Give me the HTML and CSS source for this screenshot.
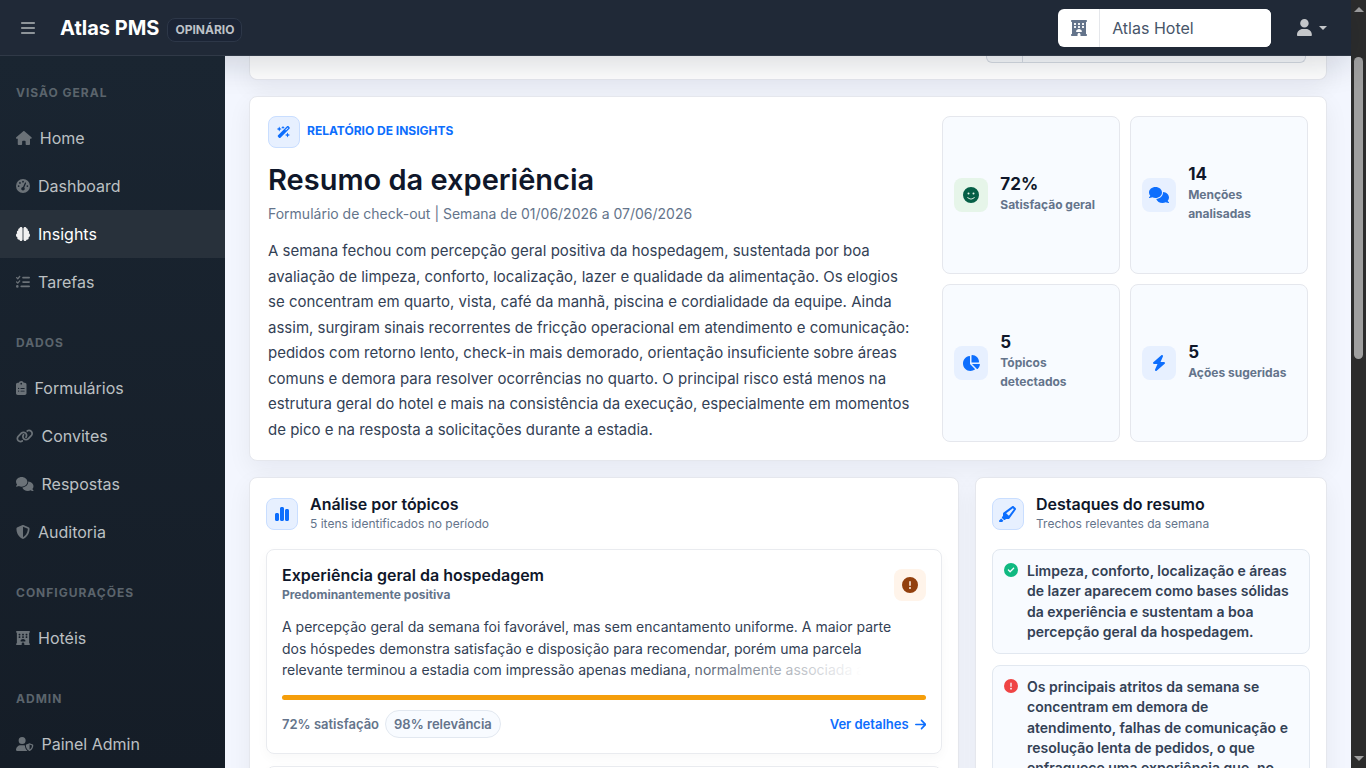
FILE: index.html
```html
<!DOCTYPE html>
<html lang="pt-BR">
<head>
<meta charset="utf-8">
<meta name="viewport" content="width=device-width, initial-scale=1">
<title>Atlas PMS - Insights</title>
<link rel="stylesheet" href="styles.css">
</head>
<body>
<svg class="sprite" aria-hidden="true">
  <defs>
    <path id="i-hotel" d="M0 32C0 14.3 14.3 0 32 0H480c17.7 0 32 14.3 32 32s-14.3 32-32 32V448c17.7 0 32 14.3 32 32s-14.3 32-32 32H304V464c0-26.5-21.5-48-48-48s-48 21.5-48 48v48H32c-17.7 0-32-14.3-32-32s14.3-32 32-32V64C14.3 64 0 49.7 0 32zm96 80v32c0 8.800 7.200 16 16 16h32c8.800 0 16-7.200 16-16V112c0-8.800-7.200-16-16-16H112c-8.800 0-16 7.200-16 16zM240 96c-8.800 0-16 7.200-16 16v32c0 8.800 7.200 16 16 16h32c8.800 0 16-7.200 16-16V112c0-8.800-7.200-16-16-16H240zm112 16v32c0 8.800 7.200 16 16 16h32c8.800 0 16-7.200 16-16V112c0-8.800-7.200-16-16-16H368c-8.800 0-16 7.200-16 16zM112 192c-8.800 0-16 7.200-16 16v32c0 8.800 7.200 16 16 16h32c8.800 0 16-7.200 16-16V208c0-8.800-7.200-16-16-16H112zm112 16v32c0 8.800 7.200 16 16 16h32c8.800 0 16-7.200 16-16V208c0-8.800-7.200-16-16-16H240c-8.800 0-16 7.200-16 16zm144-16c-8.800 0-16 7.200-16 16v32c0 8.800 7.200 16 16 16h32c8.800 0 16-7.200 16-16V208c0-8.800-7.200-16-16-16H368zM328 384c13.300 0 24.300-10.900 21-23.800c-10.600-41.500-48.200-72.200-93-72.200s-82.500 30.700-93 72.200c-3.300 12.800 7.800 23.800 21 23.800H328z"/>
    <path id="i-comments" d="M208 352c114.900 0 208-78.800 208-176S322.900 0 208 0S0 78.800 0 176c0 38.600 14.700 74.300 39.600 103.400c-3.500 9.400-8.700 17.700-14.200 24.700c-4.800 6.200-9.700 11-13.300 14.300c-1.800 1.600-3.300 2.900-4.300 3.700c-.5 .4-.9 .7-1.100 .8l-.2 .2C1 327.200-1.400 334.400 .8 340.900S9.100 352 16 352c21.800 0 43.800-5.600 62.100-12.500c9.200-3.500 17.800-7.400 25.200-11.400C134.100 343.300 169.800 352 208 352zM448 176c0 112.300-99.100 196.900-216.500 207C255.800 457.400 336.400 512 432 512c38.200 0 73.900-8.700 104.700-23.900c7.500 4 16 7.900 25.200 11.400c18.300 6.900 40.300 12.500 62.100 12.500c6.900 0 13.100-4.500 15.200-11.100c2.100-6.600-.2-13.800-5.800-17.900l-.2-.2c-.2-.2-.6-.4-1.100-.8c-1-.8-2.500-2-4.300-3.700c-3.600-3.300-8.500-8.100-13.300-14.300c-5.500-7-10.700-15.400-14.200-24.700c24.900-29 39.600-64.700 39.600-103.400c0-92.800-84.900-168.900-192.600-175.500c.4 5.100 .6 10.300 .6 15.500z"/>
    <path id="i-alert" d="M256 512A256 256 0 1 0 256 0a256 256 0 1 0 0 512zm0-384c13.300 0 24 10.700 24 24V264c0 13.300-10.700 24-24 24s-24-10.700-24-24V152c0-13.300 10.700-24 24-24zM224 352a32 32 0 1 1 64 0 32 32 0 1 1 -64 0z"/>
  </defs>
</svg>

<div class="window">
  <div class="app">
    <header class="topbar">
      <button class="menu-toggle" type="button" aria-label="Alternar menu">
        <svg class="icon" viewBox="0 0 448 512"><path d="M0 96C0 78.300 14.300 64 32 64H416c17.700 0 32 14.300 32 32s-14.300 32-32 32H32C14.300 128 0 113.700 0 96zM0 256c0-17.700 14.300-32 32-32H416c17.700 0 32 14.300 32 32s-14.300 32-32 32H32c-17.700 0-32-14.300-32-32zM448 416c0 17.700-14.300 32-32 32H32c-17.700 0-32-14.300-32-32s14.300-32 32-32H416c17.700 0 32 14.300 32 32z"/></svg>
      </button>
      <a class="brand" href="#">Atlas PMS</a>
      <span class="brand-badge">OPINÁRIO</span>
      <div class="hotel-picker">
        <label class="picker-icon" for="hotel" aria-label="Hotel"><svg class="icon" viewBox="0 0 512 512"><use href="#i-hotel"/></svg></label>
        <select class="picker-select" id="hotel"><option>Atlas Hotel</option></select>
      </div>
      <button class="user-menu" type="button" aria-label="Conta">
        <svg class="icon" viewBox="0 0 448 512"><path d="M224 256A128 128 0 1 0 224 0a128 128 0 1 0 0 256zm-45.700 48C79.800 304 0 383.800 0 482.300C0 498.700 13.300 512 29.700 512H418.300c16.400 0 29.700-13.300 29.700-29.700C448 383.800 368.200 304 269.700 304H178.300z"/></svg>
        <span class="caret"></span>
      </button>
    </header>

    <nav class="sidebar">
      <h2 class="nav-heading">VISÃO GERAL</h2>
      <a class="nav-link" href="#"><svg class="icon" viewBox="0 0 576 512"><path d="M575.800 255.500c0 18-15 32.100-32 32.100h-32l.7 160.200c0 2.700-.2 5.400-.5 8.100V472c0 22.100-17.900 40-40 40H392c-22.100 0-40-17.900-40-40V384c0-17.700-14.300-32-32-32H256c-17.700 0-32 14.300-32 32v88c0 22.100-17.900 40-40 40H104c-22.100 0-40-17.900-40-40V287.600H32c-18 0-32-14-32-32.100c0-9 3-17 10-24L266.400 8c7-7 15-8 22-8s15 2 21 7L564.800 231.500c8 7 12 15 11 24z"/></svg>Home</a>
      <a class="nav-link" href="#"><svg class="icon" viewBox="0 0 512 512"><path d="M0 256a256 256 0 1 1 512 0A256 256 0 1 1 0 256zM288 96a32 32 0 1 0 -64 0 32 32 0 1 0 64 0zM256 416c35.300 0 64-28.700 64-64c0-17.400-6.900-33.100-18.100-44.600L366 161.700c5.300-12.100-.2-26.300-12.300-31.600s-26.300 .2-31.600 12.300L257.900 288c-.6 0-1.300 0-1.900 0c-35.300 0-64 28.700-64 64s28.700 64 64 64zM176 144a32 32 0 1 0 -64 0 32 32 0 1 0 64 0zM96 288a32 32 0 1 0 0-64 32 32 0 1 0 0 64zm352-32a32 32 0 1 0 -64 0 32 32 0 1 0 64 0z"/></svg>Dashboard</a>
      <a class="nav-link active" href="#" aria-current="page"><svg class="icon" viewBox="0 0 512 512"><path d="M184 0c30.900 0 56 25.100 56 56V456c0 30.900-25.100 56-56 56c-28.900 0-52.700-21.900-55.700-50.100c-5.200 1.400-10.700 2.100-16.300 2.100c-35.300 0-64-28.700-64-64c0-7.400 1.300-14.600 3.600-21.200C21.400 367.400 0 338.200 0 304c0-31.900 18.700-59.500 45.800-72.300C37.100 220.800 32 207 32 192c0-30.700 21.600-56.300 50.400-62.600C80.800 123.900 80 118 80 112c0-29.900 20.600-55.100 48.300-62.100C131.300 21.900 155.100 0 184 0zM328 0c28.900 0 52.600 21.900 55.700 49.900c27.800 7 48.300 32.100 48.300 62.100c0 6-.8 11.900-2.400 17.400c28.800 6.200 50.400 31.900 50.400 62.600c0 15-5.100 28.800-13.800 39.700C493.300 244.500 512 272.100 512 304c0 34.200-21.400 63.400-51.600 74.800c2.300 6.600 3.600 13.800 3.600 21.200c0 35.300-28.700 64-64 64c-5.600 0-11.100-.7-16.300-2.100c-3 28.200-26.800 50.100-55.700 50.100c-30.900 0-56-25.100-56-56V56c0-30.900 25.100-56 56-56z"/></svg>Insights</a>
      <a class="nav-link" href="#"><svg class="icon" viewBox="0 0 512 512"><path d="M152.100 38.200c9.900 8.900 10.700 24 1.800 33.900l-72 80c-4.400 4.900-10.600 7.800-17.200 7.900s-12.900-2.400-17.600-7L7 113C-2.300 103.600-2.300 88.400 7 79s24.600-9.400 33.900 0l22.100 22.100 55.100-61.200c8.900-9.900 24-10.700 33.900-1.800zm0 160c9.900 8.900 10.700 24 1.800 33.900l-72 80c-4.400 4.900-10.600 7.800-17.200 7.900s-12.900-2.400-17.600-7L7 273c-9.400-9.400-9.400-24.600 0-33.900s24.600-9.400 33.900 0l22.100 22.100 55.100-61.200c8.900-9.900 24-10.700 33.900-1.800zM224 96c0-17.700 14.300-32 32-32H480c17.700 0 32 14.300 32 32s-14.300 32-32 32H256c-17.700 0-32-14.300-32-32zm0 160c0-17.700 14.300-32 32-32H480c17.700 0 32 14.300 32 32s-14.300 32-32 32H256c-17.700 0-32-14.300-32-32zM160 416c0-17.700 14.300-32 32-32H480c17.700 0 32 14.300 32 32s-14.300 32-32 32H192c-17.700 0-32-14.300-32-32zM48 368a48 48 0 1 1 0 96 48 48 0 1 1 0-96z"/></svg>Tarefas</a>

      <h2 class="nav-heading">DADOS</h2>
      <a class="nav-link" href="#"><svg class="icon" viewBox="0 0 384 512"><path d="M192 0c-41.800 0-77.400 26.700-90.500 64H64C28.700 64 0 92.700 0 128V448c0 35.300 28.700 64 64 64H320c35.300 0 64-28.700 64-64V128c0-35.300-28.700-64-64-64H282.500C269.400 26.700 233.800 0 192 0zm0 64a32 32 0 1 1 0 64 32 32 0 1 1 0-64zM72 272a24 24 0 1 1 48 0 24 24 0 1 1 -48 0zm104-16H304c8.800 0 16 7.200 16 16s-7.200 16-16 16H176c-8.800 0-16-7.200-16-16s7.200-16 16-16zM72 368a24 24 0 1 1 48 0 24 24 0 1 1 -48 0zm88 0c0-8.800 7.200-16 16-16H304c8.800 0 16 7.200 16 16s-7.200 16-16 16H176c-8.800 0-16-7.200-16-16z"/></svg>Formulários</a>
      <a class="nav-link" href="#"><svg class="icon" viewBox="0 0 640 512"><path d="M579.800 267.700c56.500-56.500 56.500-148 0-204.500c-50-50-128.800-56.500-186.300-15.400l-1.600 1.100c-14.400 10.300-17.700 30.300-7.400 44.600s30.300 17.700 44.600 7.400l1.600-1.100c32.100-22.900 76-19.300 103.800 8.600c31.500 31.500 31.500 82.500 0 114L422.300 334.800c-31.500 31.500-82.500 31.500-114 0c-27.900-27.900-31.500-71.800-8.600-103.800l1.100-1.600c10.300-14.400 6.900-34.400-7.400-44.600s-34.400-6.900-44.600 7.400l-1.100 1.600C206.500 251.200 213 330 263 380c56.500 56.500 148 56.500 204.500 0L579.800 267.700zM60.200 244.300c-56.500 56.500-56.500 148 0 204.500c50 50 128.800 56.500 186.300 15.400l1.600-1.100c14.400-10.300 17.700-30.300 7.400-44.600s-30.300-17.700-44.600-7.400l-1.600 1.100c-32.100 22.900-76 19.300-103.800-8.600C74 372 74 321 105.500 289.500L217.700 177.200c31.500-31.500 82.500-31.500 114 0c27.900 27.900 31.500 71.800 8.600 103.900l-1.100 1.600c-10.300 14.400-6.900 34.400 7.400 44.600s34.400 6.900 44.600-7.400l1.100-1.600C433.500 260.800 427 182 377 132c-56.500-56.500-148-56.500-204.500 0L60.200 244.300z"/></svg>Convites</a>
      <a class="nav-link" href="#"><svg class="icon" viewBox="0 0 640 512"><use href="#i-comments"/></svg>Respostas</a>
      <a class="nav-link" href="#"><svg class="icon" viewBox="0 0 512 512"><path d="M256 0c4.600 0 9.200 1 13.400 2.900L457.700 82.800c22 9.300 38.400 31 38.300 57.200c-.5 99.200-41.300 280.700-213.600 363.200c-16.700 8-36.100 8-52.800 0C57.300 420.700 16.500 239.200 16 140c-.1-26.200 16.300-47.900 38.300-57.200L242.700 2.900C246.800 1 251.400 0 256 0zm0 66.800V444.800C394 378 431.100 230.100 432 141.400L256 66.800z"/></svg>Auditoria</a>

      <h2 class="nav-heading">CONFIGURAÇÕES</h2>
      <a class="nav-link" href="#"><svg class="icon" viewBox="0 0 512 512"><use href="#i-hotel"/></svg>Hotéis</a>

      <h2 class="nav-heading">ADMIN</h2>
      <a class="nav-link" href="#"><svg class="icon" viewBox="0 0 640 512"><path fill-rule="evenodd" d="M224 256A128 128 0 1 0 224 0a128 128 0 1 0 0 256zM274.700 304H173.300C77.600 304 0 381.600 0 477.300c0 19.100 15.500 34.700 34.700 34.700H413.300c1.800 0 3.600-.1 5.300-.4C362 460 328 390 325 311 309 306 292 304 274.700 304zM496 224l-120 50c-10 4-16 13-16 24 1 64 27 165 125 211 7 3 15 3 22 0 98-46 124-147 125-211 0-11-6-20-16-24zM496 276v184c63-34 87-97 88-148z"/></svg>Painel Admin</a>
    </nav>

    <main class="content">
      <section class="card filter-card" aria-label="Filtros">
        <div class="filter-field"><span class="filter-addon"></span></div>
      </section>

      <section class="card summary">
        <div class="summary-text">
          <div class="eyebrow">
            <span class="icon-box"><svg class="icon" viewBox="0 0 576 512"><path d="M234.700 42.700L197 56.800c-3 1.100-5 4-5 7.200s2 6.100 5 7.200l37.700 14.100L248.800 123c1.100 3 4 5 7.200 5s6.100-2 7.200-5l14.100-37.700L315 71.200c3-1.100 5-4 5-7.200s-2-6.100-5-7.200L277.300 42.700 263.200 5c-1.100-3-4-5-7.200-5s-6.100 2-7.200 5L234.700 42.700zM46.100 395.400c-18.700 18.700-18.700 49.100 0 67.900l34.600 34.600c18.700 18.700 49.100 18.700 67.900 0L529.900 116.500c18.700-18.700 18.700-49.100 0-67.900L495.300 14.100c-18.700-18.700-49.100-18.700-67.900 0L46.100 395.400zM484.600 82.600l-105 105-23.300-23.300 105-105 23.300 23.300zM7.500 117.200C3 118.900 0 123.200 0 128s3 9.100 7.500 10.800L64 160l21.200 56.500c1.700 4.500 6 7.500 10.800 7.500s9.100-3 10.800-7.500L128 160l56.500-21.200c4.500-1.700 7.500-6 7.500-10.800s-3-9.100-7.500-10.800L128 96 106.800 39.500C105.100 35 100.800 32 96 32s-9.100 3-10.800 7.500L64 96 7.500 117.200zm352 256c-4.500 1.700-7.500 6-7.500 10.800s3 9.100 7.500 10.800L416 416l21.200 56.500c1.700 4.500 6 7.500 10.800 7.500s9.100-3 10.800-7.500L480 416l56.500-21.200c4.500-1.700 7.500-6 7.500-10.800s-3-9.100-7.500-10.800L480 352l-21.200-56.500c-1.700-4.500-6-7.500-10.800-7.500s-9.100 3-10.800 7.500L416 352l-56.500 21.200z"/></svg></span>
            <span class="eyebrow-label">RELATÓRIO DE INSIGHTS</span>
          </div>
          <h1 class="summary-title">Resumo da experiência</h1>
          <p class="summary-meta">Formulário de check-out | Semana de 01/06/2026 a 07/06/2026</p>
          <p class="summary-body">A semana fechou com percepção geral positiva da hospedagem, sustentada por boa avaliação de limpeza, conforto, localização, lazer e qualidade da alimentação. Os elogios se concentram em quarto, vista, café da manhã, piscina e cordialidade da equipe. Ainda assim, surgiram sinais recorrentes de fricção operacional em atendimento e comunicação: pedidos com retorno lento, check-in mais demorado, orientação insuficiente sobre áreas comuns e demora para resolver ocorrências no quarto. O principal risco está menos na estrutura geral do hotel e mais na consistência da execução, especialmente em momentos de pico e na resposta a solicitações durante a estadia.</p>
        </div>
        <div class="stats">
          <div class="stat">
            <span class="stat-icon good"><svg class="icon" viewBox="0 0 512 512"><path fill-rule="evenodd" d="M256 512A256 256 0 1 0 256 0a256 256 0 1 0 0 512zM164 326c16 18 46 42 92 42s76-24 92-42c6-7 16-7 23-2s7 16 1 23c-20 23-60 53-116 53s-96-30-116-53c-6-7-5-17 1-23s17-5 23 2zM144 208a32 32 0 1 1 64 0 32 32 0 1 1 -64 0zM304 208a32 32 0 1 1 64 0 32 32 0 1 1 -64 0z"/></svg></span>
            <div class="stat-text"><strong class="stat-value">72%</strong><span class="stat-label">Satisfação geral</span></div>
          </div>
          <div class="stat">
            <span class="stat-icon"><svg class="icon" viewBox="0 0 640 512"><use href="#i-comments"/></svg></span>
            <div class="stat-text"><strong class="stat-value">14</strong><span class="stat-label">Menções analisadas</span></div>
          </div>
          <div class="stat">
            <span class="stat-icon"><svg class="icon" viewBox="0 0 576 512"><path d="M304 240V16.600c0-9 7-16.600 16-16.600C443.700 0 544 100.300 544 224c0 9-7.600 16-16.600 16H304zM32 272C32 150.700 122.100 50.300 239 34.300c9.200-1.300 17 6.100 17 15.400V288L412.500 444.500c6.700 6.700 6.200 17.700-1.500 23.100C371.800 495.600 323.800 512 272 512C139.500 512 32 404.600 32 272zm526.400 16c9.300 0 16.600 7.800 15.400 17c-7.700 55.900-34.600 105.600-73.900 142.300c-6 5.600-15.400 5.200-21.200-.7L320 288H558.400z"/></svg></span>
            <div class="stat-text"><strong class="stat-value">5</strong><span class="stat-label">Tópicos detectados</span></div>
          </div>
          <div class="stat">
            <span class="stat-icon"><svg class="icon" viewBox="0 0 448 512"><path d="M349.400 44.600c5.900-13.700 1.500-29.700-10.600-38.500s-28.600-8-39.900 1.800l-256 224c-10 8.800-13.600 22.900-8.900 35.300S50.700 288 64 288H175.500L98.600 467.400c-5.900 13.700-1.500 29.700 10.600 38.500s28.600 8 39.900-1.800l256-224c10-8.800 13.600-22.900 8.900-35.300s-16.600-20.700-30-20.700H272.500L349.400 44.600z"/></svg></span>
            <div class="stat-text"><strong class="stat-value">5</strong><span class="stat-label">Ações sugeridas</span></div>
          </div>
        </div>
      </section>

      <div class="columns">
        <section class="card panel">
          <header class="panel-head">
            <span class="icon-box"><svg class="icon" viewBox="0 0 448 512"><path d="M160 80c0-26.500 21.500-48 48-48h32c26.500 0 48 21.500 48 48V432c0 26.500-21.500 48-48 48H208c-26.500 0-48-21.500-48-48V80zM0 272c0-26.500 21.500-48 48-48H80c26.500 0 48 21.500 48 48V432c0 26.500-21.500 48-48 48H48c-26.500 0-48-21.500-48-48V272zM368 96h32c26.500 0 48 21.500 48 48V432c0 26.500-21.500 48-48 48H368c-26.500 0-48-21.500-48-48V144c0-26.500 21.500-48 48-48z"/></svg></span>
            <div><h2 class="panel-title">Análise por tópicos</h2><p class="panel-sub">5 itens identificados no período</p></div>
          </header>
          <article class="topic">
            <header class="topic-head">
              <div><h3 class="topic-title">Experiência geral da hospedagem</h3><p class="topic-mood">Predominantemente positiva</p></div>
              <span class="topic-flag"><svg class="icon" viewBox="0 0 512 512"><use href="#i-alert"/></svg></span>
            </header>
            <p class="topic-body">A percepção geral da semana foi favorável, mas sem encantamento uniforme. A maior parte dos hóspedes demonstra satisfação e disposição para recomendar, porém uma parcela relevante terminou a estadia com impressão apenas mediana, normalmente associada a</p>
            <div class="topic-bar"></div>
            <footer class="topic-foot">
              <span>72% satisfação</span>
              <span class="chip">98% relevância</span>
              <a class="details" href="#">Ver detalhes <svg class="icon" viewBox="0 0 448 512"><path d="M438.600 278.600c12.500-12.500 12.500-32.800 0-45.300l-160-160c-12.500-12.500-32.800-12.500-45.300 0s-12.500 32.800 0 45.300L338.800 224 32 224c-17.700 0-32 14.300-32 32s14.300 32 32 32l306.700 0L233.400 393.400c-12.500 12.500-12.500 32.800 0 45.300s32.800 12.500 45.300 0l160-160z"/></svg></a>
            </footer>
          </article>
          <article class="topic"></article>
        </section>

        <section class="card panel">
          <header class="panel-head">
            <span class="icon-box"><svg class="icon" viewBox="0 0 576 512"><path d="M315 315l158.400-215L444.100 70.600 229 229 315 315zm-187 5V248.300c0-15.300 7.200-29.600 19.500-38.600L420.600 8.400C428 2.900 437 0 446.200 0c11.400 0 22.400 4.500 30.500 12.600l54.800 54.800c8.100 8.100 12.600 19 12.600 30.500c0 9.200-2.900 18.200-8.400 25.600L334.400 396.500c-9 12.300-23.400 19.500-38.600 19.500H224l-25.400 25.400c-12.500 12.500-32.800 12.500-45.300 0l-50.700-50.700c-12.500-12.500-12.500-32.800 0-45.300L128 320zM7 466.300l63-63 70.600 70.600-31 31c-4.500 4.500-10.600 7-17 7H24c-13.300 0-24-10.700-24-24v-4.700c0-6.400 2.500-12.500 7-17z"/></svg></span>
            <div><h2 class="panel-title">Destaques do resumo</h2><p class="panel-sub">Trechos relevantes da semana</p></div>
          </header>
          <ul class="highlights">
            <li class="highlight"><svg class="icon ok" viewBox="0 0 512 512"><path d="M256 512A256 256 0 1 0 256 0a256 256 0 1 0 0 512zM369 209L241 337c-9.400 9.400-24.600 9.400-33.900 0l-64-64c-9.400-9.400-9.400-24.600 0-33.900s24.600-9.400 33.900 0l47 47L335 175c9.400-9.400 24.600-9.400 33.900 0s9.400 24.600 0 33.900z"/></svg><span>Limpeza, conforto, localização e áreas de lazer aparecem como bases sólidas da experiência e sustentam a boa percepção geral da hospedagem.</span></li>
            <li class="highlight"><svg class="icon bad" viewBox="0 0 512 512"><use href="#i-alert"/></svg><span>Os principais atritos da semana se concentram em demora de atendimento, falhas de comunicação e resolução lenta de pedidos, o que enfraquece uma experiência que, no</span></li>
          </ul>
        </section>
      </div>
    </main>
  </div>

  <div class="scrollbar" aria-hidden="true">
    <span class="arrow-up"></span>
    <span class="thumb"></span>
    <span class="arrow-down"></span>
  </div>
</div>
</body>
</html>
```
FILE: styles.css
```css
* {
  box-sizing: border-box;
}

body {
  margin: 0;
  font-family: Inter, "Noto Sans", sans-serif;
  font-size: 16px;
  line-height: 24px;
  color: #334155;
}

h1, h2, h3, p, ul {
  margin: 0;
  padding: 0;
}

a {
  color: inherit;
  text-decoration: none;
}

button {
  border: 0;
  padding: 0;
  background: none;
  font: inherit;
  color: inherit;
}

.sprite {
  display: block;
  width: 0;
  height: 0;
}

.icon {
  display: block;
  flex: none;
  width: auto;
  height: 14px;
  fill: currentColor;
}

.window {
  display: flex;
  height: 100vh;
  overflow: hidden;
}

.app {
  flex: 1;
  min-width: 0;
  display: grid;
  grid-template: 56px minmax(0, 1fr) / 225px minmax(0, 1fr);
}

/* Top bar */
.topbar {
  grid-column: 1 / -1;
  z-index: 1;
  display: flex;
  align-items: center;
  padding: 0 24px 0 20px;
  background: #202937;
  border-bottom: 1px solid #303947;
  box-shadow: 0 8px 32px rgba(15, 23, 42, 0.16);
}

.menu-toggle {
  color: #8e9499;
  padding: 0 1px;
}

.menu-toggle .icon {
  height: 16px;
}

.brand {
  margin-left: 24px;
  font-size: 20px;
  font-weight: 700;
  color: #fff;
}

.brand-badge {
  margin: 4px 0 0 8px;
  padding: 3px 7px;
  border: 1px solid #2d3748;
  border-radius: 8px;
  background: #1b2435;
  font-size: 12px;
  line-height: 16px;
  font-weight: 700;
  color: #bdc1c7;
}

.hotel-picker {
  display: flex;
  width: 213px;
  height: 38px;
  margin-left: auto;
  border-radius: 6px;
  overflow: hidden;
  background: #fff;
}

.picker-icon {
  display: grid;
  place-items: center;
  width: 42px;
  border-right: 1px solid #e5e7eb;
  color: #64748b;
}

.picker-icon .icon {
  height: 16px;
}

.picker-select {
  flex: 1;
  min-width: 0;
  border: 0;
  padding: 0 12px;
  appearance: none;
  background: #fff;
  font: inherit;
  color: #475569;
}

.user-menu {
  display: flex;
  align-items: center;
  gap: 7px;
  margin-left: 26px;
  color: #c4c6c9;
}

.user-menu .icon {
  height: 17px;
}

.caret {
  border: 4px solid transparent;
  border-top-color: currentColor;
  border-bottom: 0;
}

/* Sidebar */
.sidebar {
  z-index: 2;
  overflow: hidden;
  background: linear-gradient(#1a2531, #151d27);
}

.nav-heading {
  padding: 28px 16px 12px;
  font-size: 12px;
  line-height: 18px;
  font-weight: 700;
  letter-spacing: 1px;
  color: #5b646c;
}

.nav-link {
  display: flex;
  align-items: center;
  gap: 8px;
  height: 48px;
  padding: 0 16px;
  color: #bcc0c3;
}

.nav-link .icon {
  color: #6b7278;
}

.nav-link.active {
  background: #28313b;
  color: #fff;
}

.nav-link.active .icon {
  color: #f1f1f1;
}

/* Content */
.content {
  overflow: hidden;
  display: flex;
  flex-direction: column;
  gap: 16px;
  padding: 0 24px;
  background: #f3f6fe;
}

.card {
  border: 1px solid #e5e7ed;
  border-radius: 8px;
  background: #fff;
  box-shadow: 0 8px 24px rgba(15, 23, 42, 0.06);
}

.filter-card {
  flex: none;
  padding: 0 20px 16px;
  border-top: 0;
  border-radius: 0 0 8px 8px;
}

.filter-field {
  width: 320px;
  height: 7px;
  margin-left: auto;
  border: 1px solid #d6dbe3;
  border-top: 0;
  border-radius: 0 0 6px 6px;
  background: #f8fafc;
}

.filter-addon {
  display: block;
  width: 36px;
  height: 6px;
  border-right: 1px solid #d6dbe3;
}

.summary {
  flex: none;
  display: grid;
  grid-template-columns: minmax(0, 18fr) minmax(0, 10fr);
  gap: 16px;
  padding: 19px 18px 18px;
}

.eyebrow {
  display: flex;
  gap: 7px;
}

.icon-box {
  display: grid;
  place-items: center;
  flex: none;
  width: 32px;
  height: 32px;
  border: 1px solid #c9deff;
  border-radius: 8px;
  background: #e7f0ff;
  color: #0d6efd;
}

.icon-box .icon {
  height: 16px;
}

.eyebrow .icon {
  height: 12px;
}

.eyebrow-label {
  padding-top: 5px;
  font-size: 12px;
  line-height: 20px;
  font-weight: 700;
  color: #0d6efd;
}

.summary-title {
  margin-top: 14px;
  font-size: 29px;
  line-height: 36px;
  font-weight: 600;
  color: #0f172a;
}

.summary-meta {
  margin-top: 6px;
  font-size: 14px;
  line-height: 20px;
  color: #64748b;
}

.summary-body {
  margin-top: 14px;
  padding-right: 14px;
  font-size: 15px;
  line-height: 1.7;
}

.stats {
  display: grid;
  grid-template-columns: 1fr 1fr;
  gap: 10px;
}

.stat {
  display: flex;
  align-items: center;
  gap: 12px;
  padding: 11px;
  border: 1px solid #e5e7ed;
  border-radius: 8px;
  background: #f8fbff;
}

.stat-icon {
  display: grid;
  place-items: center;
  flex: none;
  width: 34px;
  height: 34px;
  border-radius: 8px;
  background: #e7f0ff;
  color: #0d6efd;
}

.stat-icon .icon {
  height: 16px;
}

.stat-icon.good {
  background: #e6f5e9;
  color: #065f46;
}

.stat-text {
  padding-bottom: 4px;
}

.stat-value {
  display: block;
  font-size: 17px;
  line-height: 22px;
  font-weight: 700;
  color: #0f172a;
}

.stat-label {
  display: block;
  font-size: 12px;
  line-height: 19px;
  font-weight: 700;
  color: #64748b;
}

.columns {
  flex: none;
  display: grid;
  grid-template-columns: minmax(0, 1fr) 352px;
  gap: 16px;
}

.panel {
  padding: 16px;
}

.panel-head {
  display: flex;
  align-items: center;
  gap: 12px;
  margin-bottom: 15px;
}

.panel-title,
.topic-title {
  font-size: 16px;
  line-height: 20px;
  font-weight: 600;
  color: #0f172a;
}

.panel-sub {
  font-size: 12px;
  line-height: 20px;
  color: #64748b;
}

.topic {
  margin-bottom: 12px;
  padding: 15px;
  border: 1px solid #e9ebef;
  border-radius: 8px;
  box-shadow: 0 4px 12px rgba(15, 23, 42, 0.03);
}

.topic-head {
  display: flex;
  align-items: center;
  justify-content: space-between;
}

.topic-mood {
  font-size: 12px;
  line-height: 20px;
  font-weight: 700;
  color: #64748b;
}

.topic-flag {
  display: grid;
  place-items: center;
  width: 32px;
  height: 32px;
  border-radius: 8px;
  background: #fff4ea;
  color: #92400e;
}

.topic-flag .icon {
  height: 16px;
}

.topic-body {
  position: relative;
  margin-top: 11px;
  padding-right: 14px;
  font-size: 14px;
  line-height: 1.55;
}

.topic-body::after {
  content: "";
  position: absolute;
  right: 0;
  bottom: 0;
  width: 40%;
  height: 21px;
  background: linear-gradient(to right, rgba(255, 255, 255, 0), #fff 75%);
}

.topic-bar {
  height: 5px;
  margin: 14px 0 10px;
  border-radius: 3px;
  background: #f59e0b;
}

.topic-foot {
  display: flex;
  align-items: center;
  gap: 6px;
  font-size: 13px;
  line-height: 20px;
  font-weight: 600;
  color: #64748b;
}

.chip {
  padding: 3px 8px;
  border: 1px solid #e2e8f0;
  border-radius: 14px;
  background: #f8fbff;
}

.details {
  display: flex;
  align-items: center;
  gap: 6px;
  margin-left: auto;
  color: #0d6efd;
}

.details .icon {
  height: 13px;
}

.highlights {
  display: grid;
  gap: 11px;
  list-style: none;
}

.highlight {
  display: flex;
  gap: 9px;
  padding: 11px;
  border: 1px solid #e2e8f0;
  border-radius: 8px;
  background: #f8fbff;
  font-size: 14px;
  line-height: 1.45;
  font-weight: 600;
}

.highlight .icon {
  margin-top: 2px;
}

.ok {
  color: #10b981;
}

.bad {
  color: #ef4444;
}

/* Page scrollbar */
.scrollbar {
  flex: none;
  display: flex;
  flex-direction: column;
  align-items: center;
  width: 15px;
  padding: 7px 0;
  background: #2c2c2c;
}

.arrow-up,
.arrow-down {
  border: 5px solid transparent;
}

.arrow-up {
  border-top: 0;
  border-bottom-color: #9f9f9f;
}

.arrow-down {
  margin-top: auto;
  border-bottom: 0;
  border-top-color: #9f9f9f;
}

.thumb {
  width: 9px;
  height: 40%;
  margin-top: 45px;
  border-radius: 5px;
  background: #9f9f9f;
}
```
